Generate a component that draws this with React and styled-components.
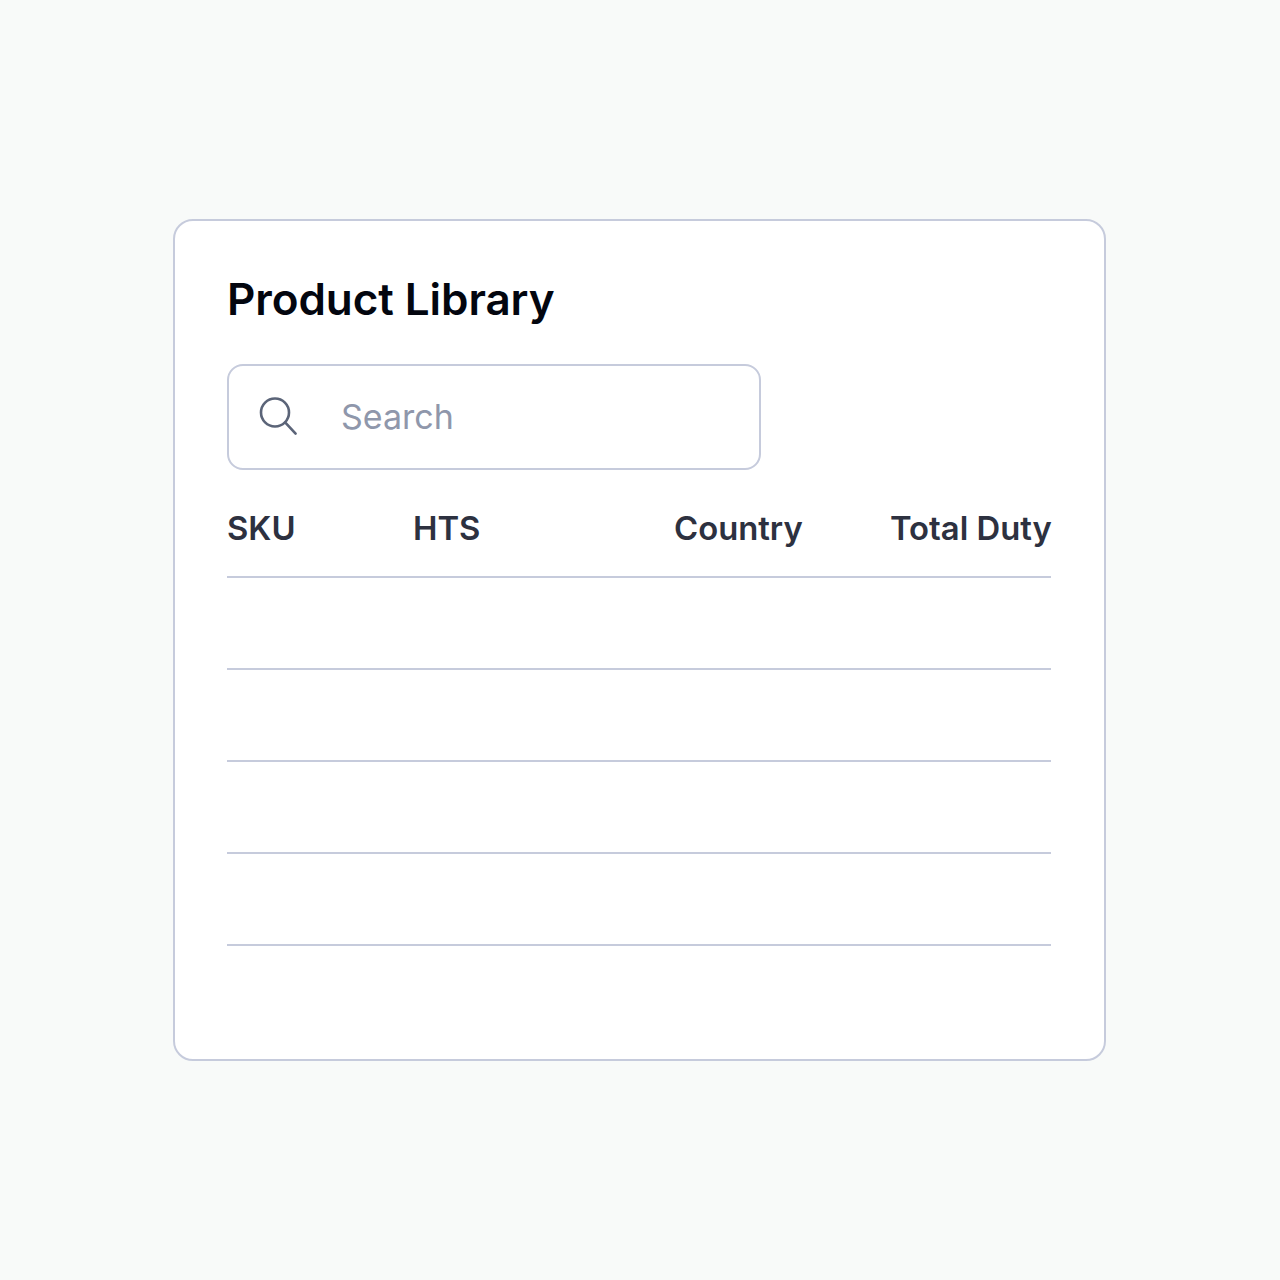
import React from "react";
import styled, { createGlobalStyle } from "styled-components";

const Global = createGlobalStyle`
  html, body { margin: 0; padding: 0; background: #f8faf9; }
  body { font-family: Inter, "Liberation Sans", sans-serif; }
`;

const Page = styled.div`
  box-sizing: border-box;
  width: 1280px;
  height: 1280px;
  padding-right: 1px;
  display: flex;
  align-items: center;
  justify-content: center;
  background: #f8faf9;
`;

const Card = styled.section`
  box-sizing: border-box;
  width: 933px;
  height: 842px;
  padding: 51px 53px 0 52px;
  background: #fff;
  border: 2px solid #c6cbdc;
  border-radius: 20px;
`;

const Title = styled.h1`
  margin: 0;
  font-size: 44px;
  line-height: 54px;
  font-weight: 600;
  letter-spacing: -0.07px;
  color: #03060f;
`;

const SearchBox = styled.div`
  box-sizing: border-box;
  width: 534px;
  height: 106px;
  margin-top: 38px;
  padding-left: 29px;
  display: flex;
  align-items: center;
  border: 2px solid #c6cbdc;
  border-radius: 16px;
`;

const SearchIcon = styled.svg`
  width: 40px;
  height: 40px;
  flex: none;
  color: #5b6478;
`;

const SearchLabel = styled.span`
  margin-left: 43px;
  font-size: 34px;
  line-height: 40px;
  color: #8f97ab;
`;

const Table = styled.div`
  margin-top: 34px;
`;

const HeadRow = styled.div`
  display: grid;
  grid-template-columns: 186px 261px 216px 1fr;
  height: 74px;
  box-sizing: border-box;
  border-bottom: 2px solid #c6cbdc;
`;

const HeadCell = styled.div`
  font-size: 32.8px;
  line-height: 48px;
  font-weight: 600;
  color: #2d3140;
  white-space: nowrap;
  text-align: ${(p) => (p.$end ? "right" : "left")};
`;

const BodyRow = styled.div`
  height: 92px;
  box-sizing: border-box;
  border-bottom: 2px solid #c6cbdc;
`;

export default function App() {
  return (
    <Page>
      <Global />
      <Card>
        <Title>Product Library</Title>
        <SearchBox>
          <SearchIcon viewBox="0 0 40 40" fill="none" stroke="currentColor" strokeWidth="2.6">
            <circle cx="17" cy="15.5" r="14" />
            <path d="M27.6 25.8 L37.6 36.6" strokeLinecap="round" />
          </SearchIcon>
          <SearchLabel>Search</SearchLabel>
        </SearchBox>
        <Table>
          <HeadRow>
            <HeadCell>SKU</HeadCell>
            <HeadCell>HTS</HeadCell>
            <HeadCell>Country</HeadCell>
            <HeadCell $end>Total Duty</HeadCell>
          </HeadRow>
          {[0, 1, 2, 3].map((i) => (
            <BodyRow key={i} />
          ))}
        </Table>
      </Card>
    </Page>
  );
}
